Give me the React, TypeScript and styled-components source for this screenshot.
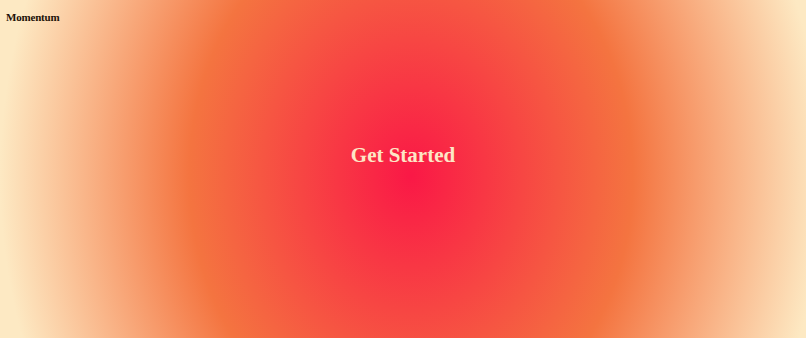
import React from 'react';
import styled, { createGlobalStyle } from 'styled-components';

const GlobalStyle = createGlobalStyle`
  html, body {
    margin: 0;
    padding: 0;
  }
  body {
    font-family: 'Liberation Serif', 'Times New Roman', serif;
  }
`;

const Page = styled.div`
  min-height: 100vh;
  display: flex;
  flex-direction: column;
  background: radial-gradient(
    ellipse 51% 148% at 51% 52%,
    #fa1846 0%,
    #f47440 54%,
    #fde9c3 100%
  );
`;

const Header = styled.header`
  padding: 7px 6px 11px;
`;

const Logo = styled.span`
  font-size: 11px;
  line-height: 14px;
  font-weight: 700;
  color: #1c1208;
  letter-spacing: -0.2px;
`;

const Hero = styled.main`
  flex: 1;
  display: flex;
  align-items: center;
  justify-content: center;
  padding-bottom: 64px;
`;

const Title = styled.h1`
  margin: 0;
  font-size: 21px;
  line-height: 26px;
  font-weight: 700;
  color: #fde6c6;
`;

export default function App() {
  return (
    <>
      <GlobalStyle />
      <Page>
        <Header>
          <Logo>Momentum</Logo>
        </Header>
        <Hero>
          <Title>Get Started</Title>
        </Hero>
      </Page>
    </>
  );
}
